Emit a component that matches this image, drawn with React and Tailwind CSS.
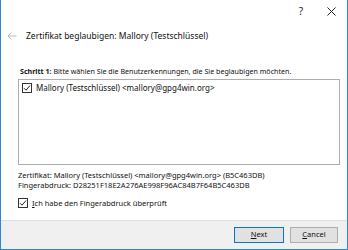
import React from "react";

const CheckBox = () => (
  <span className="flex items-center justify-center w-[10px] h-[10px] border border-[#333] bg-white shrink-0">
    <svg width="8" height="8" viewBox="0 0 8 8">
      <path d="M1 4.2 L3 6.2 L7 1.5" fill="none" stroke="#222" strokeWidth="1" />
    </svg>
  </span>
);

const App = () => {
  return (
    <div className="w-[348px] h-[250px] bg-white border-x border-b border-[#2b88d8] flex flex-col text-[#111] font-['Segoe_UI','Noto_Sans',sans-serif] text-[7.5px] leading-[10px]">
      <div className="h-[22px] flex items-center justify-end pr-[11px] text-[#222]">
        <span className="text-[10px] mr-[24px]">?</span>
        <svg width="9" height="9" viewBox="0 0 9 9">
          <path d="M0.5 0.5 L8.5 8.5 M8.5 0.5 L0.5 8.5" stroke="#222" strokeWidth="1" />
        </svg>
      </div>
      <div className="h-[28px] flex items-center pl-[6px]">
        <svg width="10" height="8" viewBox="0 0 10 8" className="mr-[9px]">
          <path d="M9.5 4 H1 M4.5 0.5 L1 4 L4.5 7.5" fill="none" stroke="#bbb" strokeWidth="1" />
        </svg>
        <span className="text-[8.5px]">Zertifikat beglaubigen: Mallory (Testschlüssel)</span>
      </div>
      <div className="flex-1 flex flex-col px-[17px]">
        <div className="mt-[16px] pl-[2px] text-[7.1px]">
          <span className="font-bold">Schritt 1:</span> Bitte wählen Sie die Benutzerkennungen, die Sie beglaubigen möchten.
        </div>
        <div className="mt-[3px] h-[86px] w-[322px] border border-[#adadad] px-[3px] pt-[3px]">
          <div className="flex items-center gap-[4px] text-[8px]">
            <CheckBox />
            <span>Mallory (Testschlüssel) &lt;mallory@gpg4win.org&gt;</span>
          </div>
        </div>
        <div className="mt-[5px]">
          Zertifikat: Mallory (Testschlüssel) &lt;mallory@gpg4win.org&gt; (B5C463DB)
        </div>
        <div>Fingerabdruck: D28251F18E2A276AE998F96AC84B7F64B5C463DB</div>
        <div className="mt-[8px] flex items-center gap-[4px]">
          <CheckBox />
          <span>
            <span className="underline">I</span>ch habe den Fingerabdruck überprüft
          </span>
        </div>
      </div>
      <div className="h-[29px] bg-[#f0f0f0] border-t border-[#dfdfdf] flex items-center justify-end gap-[6px] pr-[9px]">
        <button className="w-[50px] h-[16px] bg-[#e1e1e1] border border-[#0078d7] text-[7.5px] leading-none">
          <span className="underline">N</span>ext
        </button>
        <button className="w-[48px] h-[16px] bg-[#e1e1e1] border border-[#adadad] text-[7.5px] leading-none">
          <span className="underline">C</span>ancel
        </button>
      </div>
    </div>
  );
};

export default App;
